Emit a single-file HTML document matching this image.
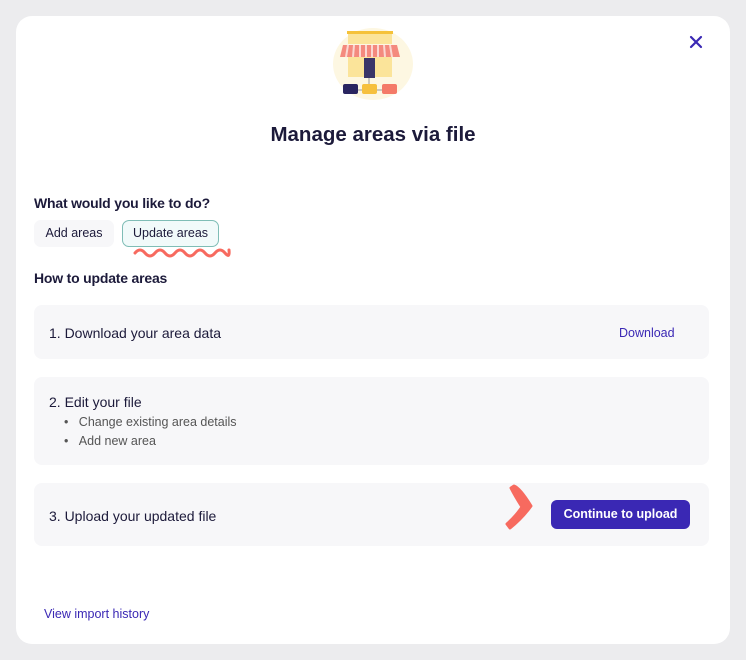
<!DOCTYPE html>
<html><head><style>
body{margin:0;width:746px;height:660px;background:#ececee;font-family:"Liberation Sans",sans-serif;position:relative;overflow:hidden;color:#1c1a3a}
.modal{position:absolute;left:16px;top:16px;width:714px;height:628px;background:#fff;border-radius:16px}
.abs{position:absolute}
h1{position:absolute;top:123px;left:0;width:746px;text-align:center;margin:0;font-size:20.5px;font-weight:bold;color:#1c1a3a}
.card{position:absolute;left:34px;width:675px;background:#f7f7f9;border-radius:8px}
.t{font-size:14px;color:#1c1a3a}
</style></head><body>
<div class="modal"></div>
<svg class="abs" style="left:684px;top:30px" width="24" height="24"><path d="M7 7L17 17M17 7L7 17" stroke="#3a28b4" stroke-width="2.2" stroke-linecap="round"/></svg>
<svg class="abs" style="left:320px;top:20px" width="110" height="90">
<ellipse cx="53" cy="44" rx="40" ry="36" fill="#fdf7e2"/>
<rect x="27" y="11" width="46" height="3" fill="#f5c23a"/>
<rect x="28" y="14" width="44" height="10" fill="#fbe49a"/>
<path d="M23 25h54l3 12H20z" fill="#f48a7e"/>
<path d="M28 25l-2 12M34 25l-1 12M40 25v12M46 25v12M52 25v12M58 25v12M64 25l1 12M70 25l2 12" stroke="#fbd8d2" stroke-width="2"/>
<rect x="28" y="37" width="44" height="20" fill="#fbe49a"/>
<rect x="44" y="38" width="11" height="20" fill="#3a3568"/>
<line x1="49" y1="58" x2="49" y2="68" stroke="#999" stroke-width="1"/>
<line x1="30" y1="70" x2="70" y2="70" stroke="#999" stroke-width="1"/>
<rect x="23" y="64" width="15" height="10" rx="2" fill="#2a2560"/>
<rect x="42" y="64" width="15" height="10" rx="2" fill="#f6c03d"/>
<rect x="62" y="64" width="15" height="10" rx="2" fill="#f47a68"/>
</svg>
<h1>Manage areas via file</h1>
<div class="abs" style="left:34px;top:195px;font-size:14px;font-weight:bold;letter-spacing:-0.2px">What would you like to do?</div>
<div class="abs t" style="left:34px;top:220px;width:80px;height:27px;background:#f7f7f9;border-radius:7px;line-height:27px;text-align:center;font-size:12.5px">Add areas</div>
<div class="abs t" style="left:122px;top:220px;width:95px;height:25px;background:#f1fafa;border:1.5px solid #7fbdb6;border-radius:7px;line-height:25px;text-align:center;font-size:12.5px">Update areas</div>
<svg class="abs" style="left:120px;top:245px" width="112" height="16"><path d="M15 8q5 -6 10 0t10 0t10 0t10 0t10 0t10 0t10 0t10 0t10 0t4 -3" fill="none" stroke="#f76a5f" stroke-width="3" stroke-linecap="round"/></svg>
<div class="abs" style="left:34px;top:270px;font-size:14px;font-weight:bold;letter-spacing:-0.2px">How to update areas</div>
<div class="card" style="top:305px;height:54px"><div class="abs t" style="left:15px;top:20px">1. Download your area data</div><div class="abs" style="left:585px;top:21px;font-size:12.5px;color:#3a28b4">Download</div></div>
<div class="card" style="top:377px;height:88px"><div class="abs t" style="left:15px;top:17px">2. Edit your file</div>
<div class="abs" style="left:30px;top:36px;font-size:12.5px;color:#555;line-height:19px">•&nbsp;&nbsp;&nbsp;Change existing area details<br>•&nbsp;&nbsp;&nbsp;Add new area</div></div>
<div class="card" style="top:483px;height:63px"><div class="abs t" style="left:15px;top:25px">3. Upload your updated file</div>
<div class="abs" style="left:517px;top:17px;width:139px;height:29px;background:#3a28b4;border-radius:6px;color:#fff;font-size:12.5px;font-weight:bold;text-align:center;line-height:29px">Continue to upload</div></div>
<svg class="abs" style="left:500px;top:478px" width="40" height="60"><path d="M14 8Q20 10 31 28L28 32Q20 42 10 50L7 46Q16 38 22 29Q15 18 11 10Z" fill="#f76a5f" stroke="#f76a5f" stroke-width="3" stroke-linejoin="round"/></svg>
<div class="abs" style="left:44px;top:607px;font-size:12.5px;color:#3a28b4">View import history</div>
</body></html>
